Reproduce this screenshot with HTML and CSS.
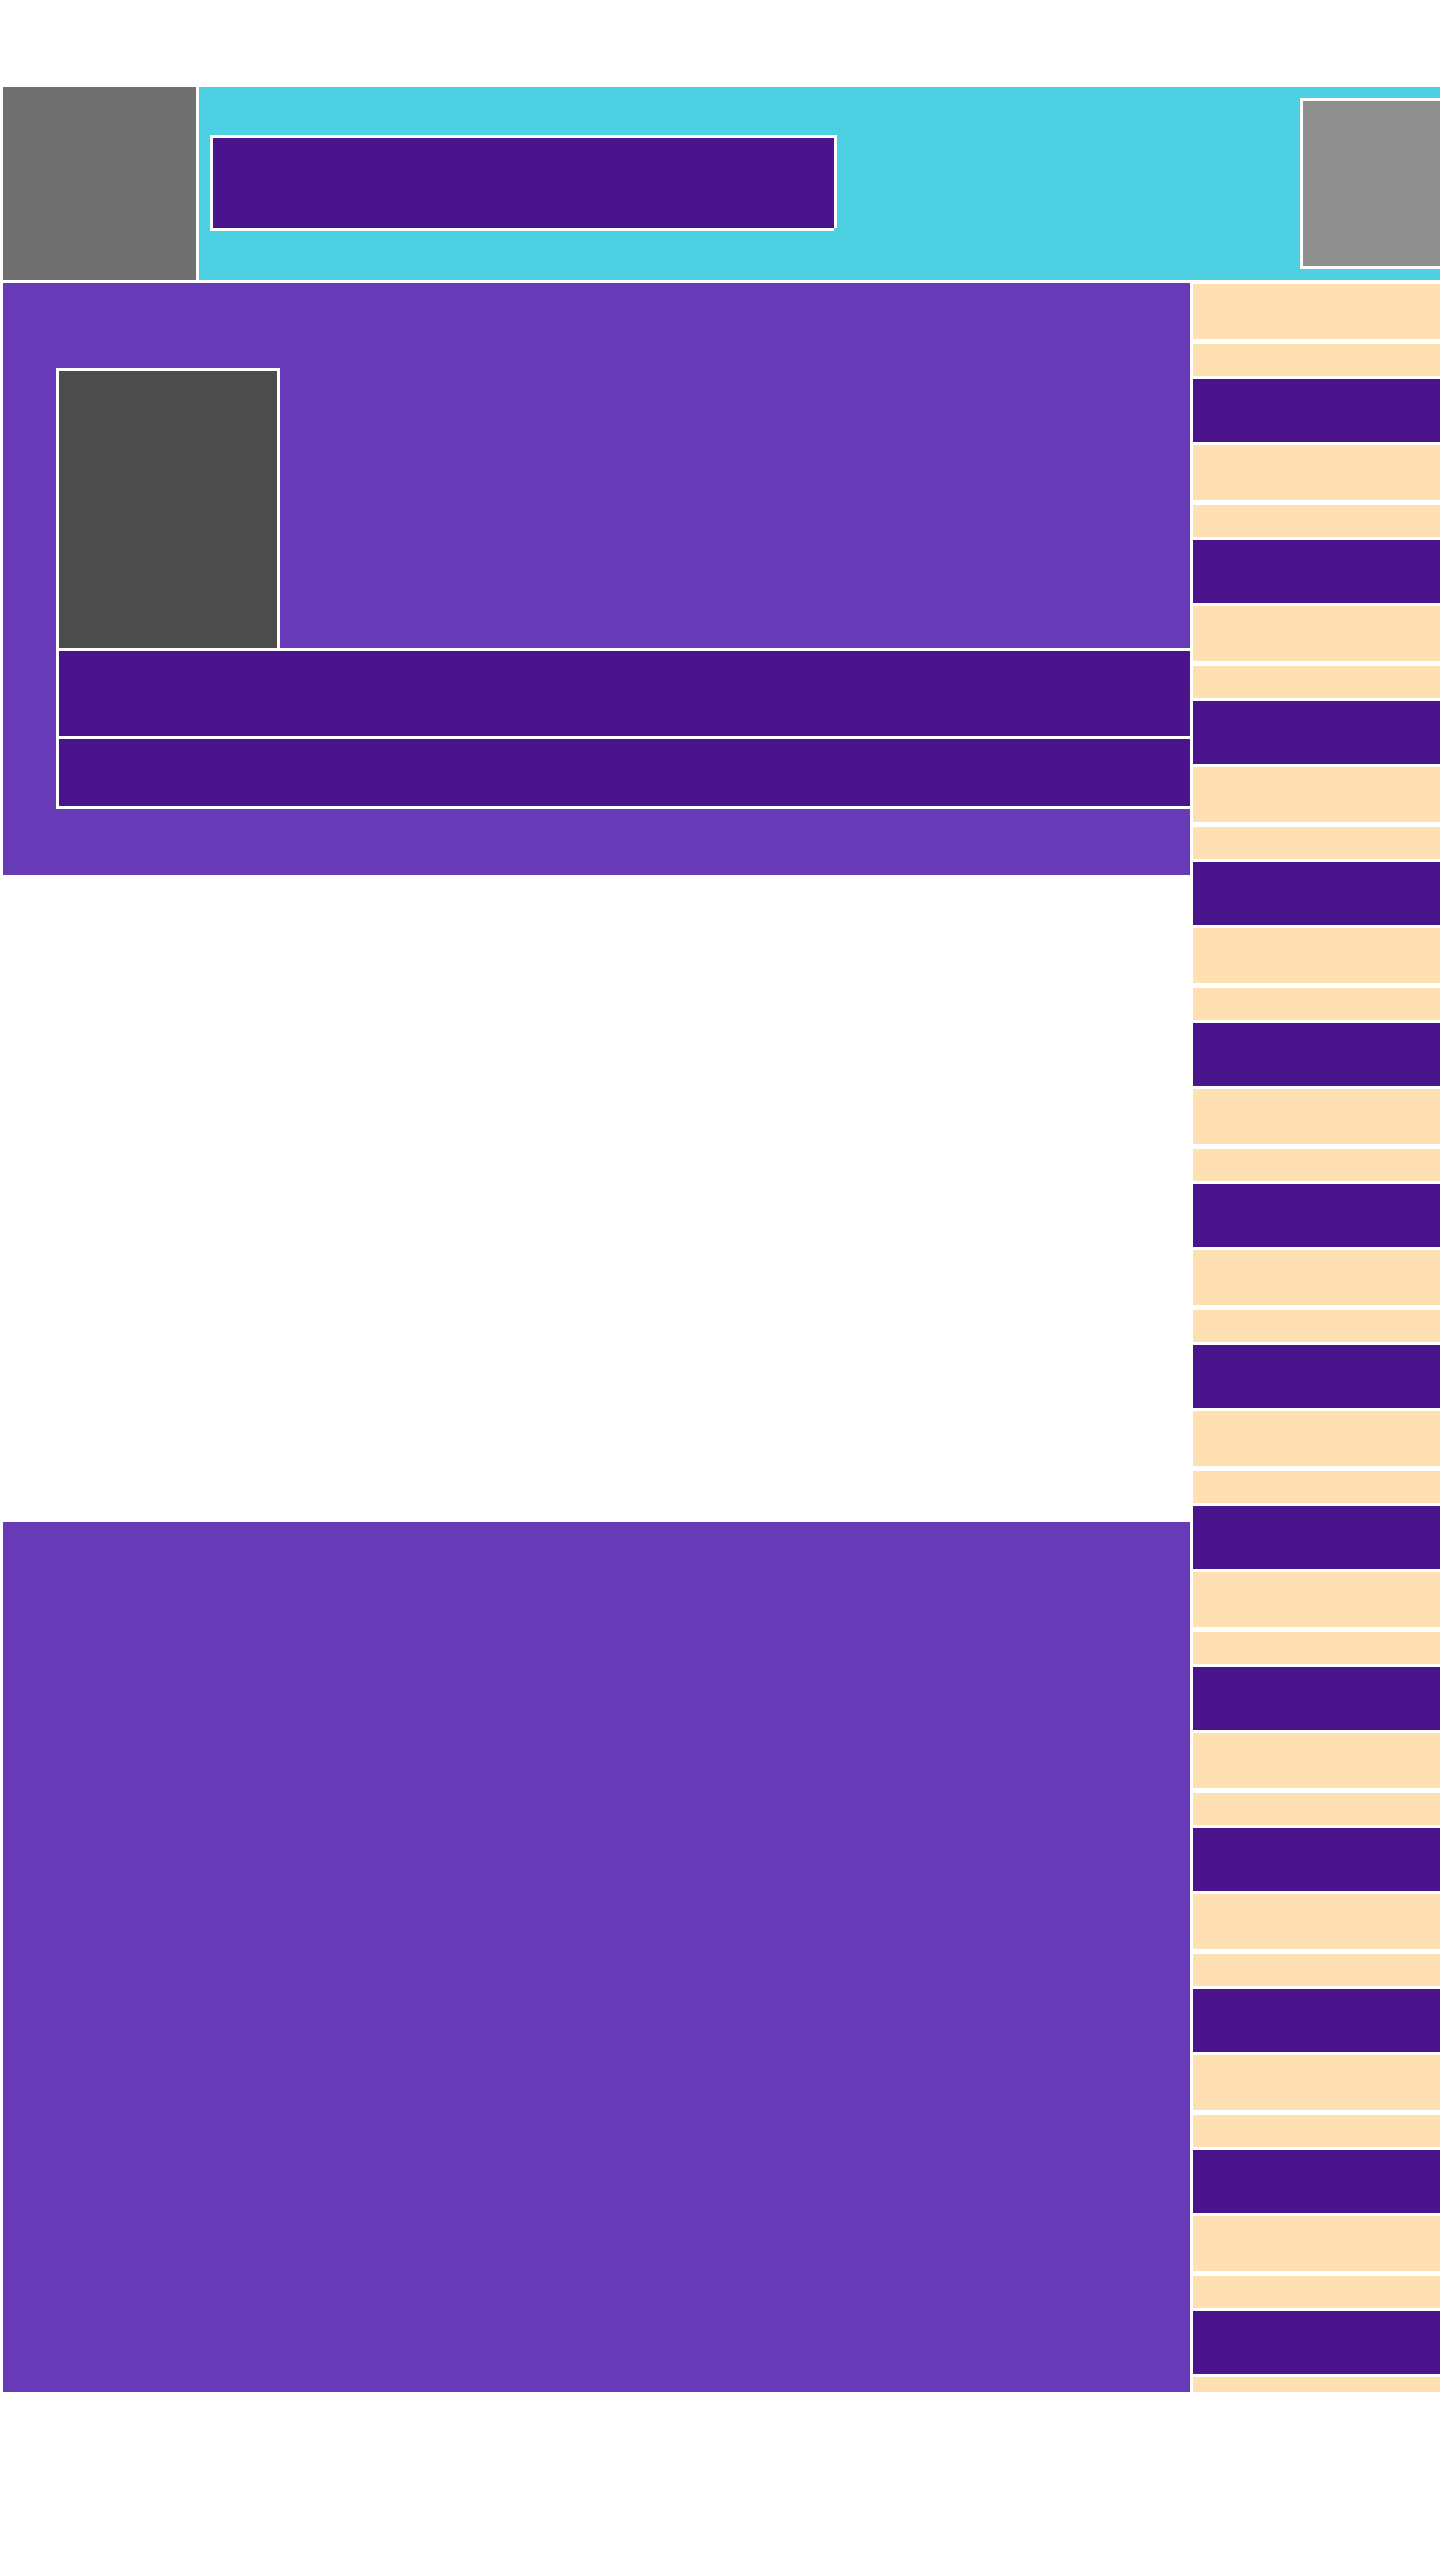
FILE: index.html
```html
<!DOCTYPE html>
<html lang="en">
<head>
    <meta charset="UTF-8">
    <meta name="viewport" content="width=device-width, initial-scale=1.0">
    <title>Layout</title>
    <link rel="stylesheet" href="styles.css">
</head>
<body>

    <header class="topbar">
        <div class="logo"></div>
        <div class="banner">
            <div class="banner-title"></div>
            <div class="banner-avatar"></div>
        </div>
    </header>

    <div class="layout">
        <main class="content">
            <section class="hero">
                <div class="hero-thumb"></div>
                <div class="hero-row hero-row-tall"></div>
                <div class="hero-row hero-row-short"></div>
            </section>
            <div class="spacer"></div>
            <section class="lower"></section>
        </main>

        <aside class="sidebar">
            <div class="item"><div class="item-head"></div><div class="item-sub"></div><div class="item-body"></div></div>
            <div class="item"><div class="item-head"></div><div class="item-sub"></div><div class="item-body"></div></div>
            <div class="item"><div class="item-head"></div><div class="item-sub"></div><div class="item-body"></div></div>
            <div class="item"><div class="item-head"></div><div class="item-sub"></div><div class="item-body"></div></div>
            <div class="item"><div class="item-head"></div><div class="item-sub"></div><div class="item-body"></div></div>
            <div class="item"><div class="item-head"></div><div class="item-sub"></div><div class="item-body"></div></div>
            <div class="item"><div class="item-head"></div><div class="item-sub"></div><div class="item-body"></div></div>
            <div class="item"><div class="item-head"></div><div class="item-sub"></div><div class="item-body"></div></div>
            <div class="item"><div class="item-head"></div><div class="item-sub"></div><div class="item-body"></div></div>
            <div class="item"><div class="item-head"></div><div class="item-sub"></div><div class="item-body"></div></div>
            <div class="item"><div class="item-head"></div><div class="item-sub"></div><div class="item-body"></div></div>
            <div class="item"><div class="item-head"></div><div class="item-sub"></div><div class="item-body"></div></div>
            <div class="item"><div class="item-head"></div><div class="item-sub"></div><div class="item-body"></div></div>
            <div class="item"><div class="item-head"></div><div class="item-sub"></div><div class="item-body"></div></div>
        </aside>
    </div>

</body>
</html>
```

FILE: styles.css
```css
body {
    margin: 0;
    padding: 87px 0 0 3px;
    background-color: #fff;
    font-family: 'Liberation Sans', Arial, sans-serif;
    overflow-x: hidden;
}

/* Top bar */
.topbar {
    display: flex;
    gap: 3px;
    height: 193px;
    overflow: hidden;
}

.logo {
    width: 193px;
    flex-shrink: 0;
    background-color: #707070;
}

.banner {
    flex: 1;
    display: flex;
    align-items: flex-start;
    background-color: #4dd0e1;
    overflow: hidden;
}

.banner-title {
    width: 621px;
    height: 90px;
    margin: 48px 0 0 11px;
    flex-shrink: 0;
    background-color: #4a148c;
    border-top: 3px solid #fff;
    border-left: 3px solid #fff;
    box-shadow: 3px 0 0 #fff, 0 3px 0 #fff;
}

.banner-avatar {
    width: 180px;
    height: 165px;
    margin: 11px -46px 0 auto;
    flex-shrink: 0;
    background-color: #8f8f8f;
    border: 3px solid #fff;
}

/* Body */
.layout {
    display: flex;
    gap: 3px;
    margin-top: 3px;
    height: 2109px;
    overflow: hidden;
}

.content {
    width: 1187px;
    flex-shrink: 0;
    display: flex;
    flex-direction: column;
}

.hero {
    height: 592px;
    box-sizing: border-box;
    padding: 85px 0 0 53px;
    background-color: #673ab7;
}

.hero-thumb {
    width: 218px;
    height: 277px;
    background-color: #4d4d4d;
    border: 3px solid #fff;
}

.hero-row {
    width: 1131px;
    margin-top: -3px;
    background-color: #4a148c;
    border: 3px solid #fff;
}

.hero-row-tall {
    height: 85px;
}

.hero-row-short {
    height: 67px;
}

.spacer {
    height: 647px;
}

.lower {
    height: 870px;
    background-color: #673ab7;
}

/* Sidebar */
.sidebar {
    flex: 1;
    padding-top: 1px;
}

.item-head,
.item-sub {
    background-color: #ffe0b2;
}

.item-head {
    height: 55px;
    margin-bottom: 5px;
}

.item-sub {
    height: 32px;
    margin-bottom: 3px;
}

.item-body {
    height: 63px;
    margin-bottom: 3px;
    background-color: #4a148c;
}
```
